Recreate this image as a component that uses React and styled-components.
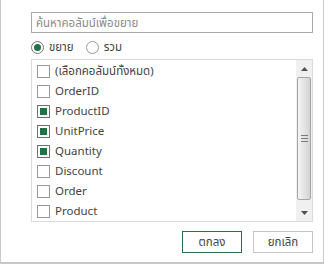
import React from "react";
import styled, { createGlobalStyle } from "styled-components";

const Global = createGlobalStyle`
  html, body { margin: 0; padding: 0; background: #fff; }
  body { font-family: "Segoe UI", "Noto Sans", "Noto Sans Thai", "Leelawadee UI", sans-serif; }
  * { box-sizing: border-box; }
`;

const Dialog = styled.div`
  width: 324px;
  height: 264px;
  border: 1px solid #c8c8c8;
  border-top: none;
  border-bottom-width: 2px;
  padding: 12px 10px 0 30px;
  display: flex;
  flex-direction: column;
  background: #fff;
  color: #444;
  font-size: 11.5px;
  line-height: 14px;
`;

const Search = styled.input`
  height: 21px;
  width: 100%;
  border: 1px solid #a9a9a9;
  padding: 0 4px;
  font: inherit;
  font-size: 11.5px;
  outline: none;
  flex-shrink: 0;
  &::placeholder { color: #8a8a8a; }
`;

const RadioRow = styled.div`
  display: flex;
  align-items: center;
  height: 14px;
  margin-top: 7px;
  flex-shrink: 0;
`;

const RadioLabel = styled.label`
  display: flex;
  align-items: center;
  gap: 5px;
  height: 14px;
  margin-right: ${p => p.$gap || 0}px;
  color: #444;
`;

const RadioCircle = styled.span`
  width: 13px;
  height: 13px;
  border-radius: 50%;
  border: 1px solid ${p => (p.$on ? "#777" : "#999")};
  display: flex;
  align-items: center;
  justify-content: center;
  &::after {
    content: "";
    width: 7px;
    height: 7px;
    border-radius: 50%;
    background: ${p => (p.$on ? "#217346" : "transparent")};
  }
`;

const ListBox = styled.div`
  margin-top: 5px;
  height: 163px;
  flex-shrink: 0;
  border: 1px solid #dadada;
  display: flex;
`;

const Items = styled.div`
  flex: 1;
  padding: 1px 0 0 5px;
`;

const Row = styled.div`
  height: 20px;
  display: flex;
  align-items: center;
  gap: 5px;
  color: #444;
  white-space: nowrap;
`;

const Box = styled.span`
  width: 13px;
  height: 13px;
  border: 1px solid ${p => (p.$on ? "#707070" : "#999")};
  display: flex;
  align-items: center;
  justify-content: center;
  background: #fff;
  &::after {
    content: "";
    width: 7px;
    height: 7px;
    background: ${p => (p.$on ? "#217346" : "transparent")};
  }
`;

const ScrollBar = styled.div`
  width: 16px;
  background: #f0f0f0;
  display: flex;
  flex-direction: column;
  align-items: center;
`;

const Arrow = styled.div`
  height: 17px;
  width: 100%;
  display: flex;
  align-items: center;
  justify-content: center;
`;

const Thumb = styled.div`
  width: 14px;
  height: 123px;
  border: 1px solid #a6a6a6;
  border-radius: 2px;
  background: linear-gradient(to right, #f4f4f4, #dedede 70%, #d2d2d2);
  display: flex;
  align-items: center;
  justify-content: center;
`;

const Track = styled.div`
  flex: 1;
`;

const Buttons = styled.div`
  margin-top: 9px;
  display: flex;
  justify-content: flex-end;
  gap: 11px;
`;

const Button = styled.button`
  width: 60px;
  height: 22px;
  background: #fff;
  border: 1px solid ${p => (p.$primary ? "#217346" : "#c4c4c4")};
  font: inherit;
  font-size: 11.5px;
  color: #444;
  padding: 0;
`;

const items = [
  ["(เลือกคอลัมน์ทั้งหมด)", false],
  ["OrderID", false],
  ["ProductID", true],
  ["UnitPrice", true],
  ["Quantity", true],
  ["Discount", false],
  ["Order", false],
  ["Product", false],
];

export default function App() {
  return (
    <>
      <Global />
      <Dialog>
        <Search placeholder="ค้นหาคอลัมน์เพื่อขยาย" />
        <RadioRow>
          <RadioLabel $gap={12}>
            <RadioCircle $on />
            ขยาย
          </RadioLabel>
          <RadioLabel>
            <RadioCircle />
            รวม
          </RadioLabel>
        </RadioRow>
        <ListBox>
          <Items>
            {items.map(([t, on]) => (
              <Row key={t}>
                <Box $on={on} />
                {t}
              </Row>
            ))}
          </Items>
          <ScrollBar>
            <Arrow>
              <svg width="7" height="4" viewBox="0 0 7 4"><path d="M0 4 L3.5 0 L7 4 Z" fill="#505050" /></svg>
            </Arrow>
            <Thumb>
              <svg width="7" height="7" viewBox="0 0 7 7">
                <path d="M0 0.5 H7 M0 3.5 H7 M0 6.5 H7" stroke="#7a7a7a" strokeWidth="1" />
              </svg>
            </Thumb>
            <Track />
            <Arrow>
              <svg width="7" height="4" viewBox="0 0 7 4"><path d="M0 0 L3.5 4 L7 0 Z" fill="#505050" /></svg>
            </Arrow>
          </ScrollBar>
        </ListBox>
        <Buttons>
          <Button $primary>ตกลง</Button>
          <Button>ยกเลิก</Button>
        </Buttons>
      </Dialog>
    </>
  );
}
